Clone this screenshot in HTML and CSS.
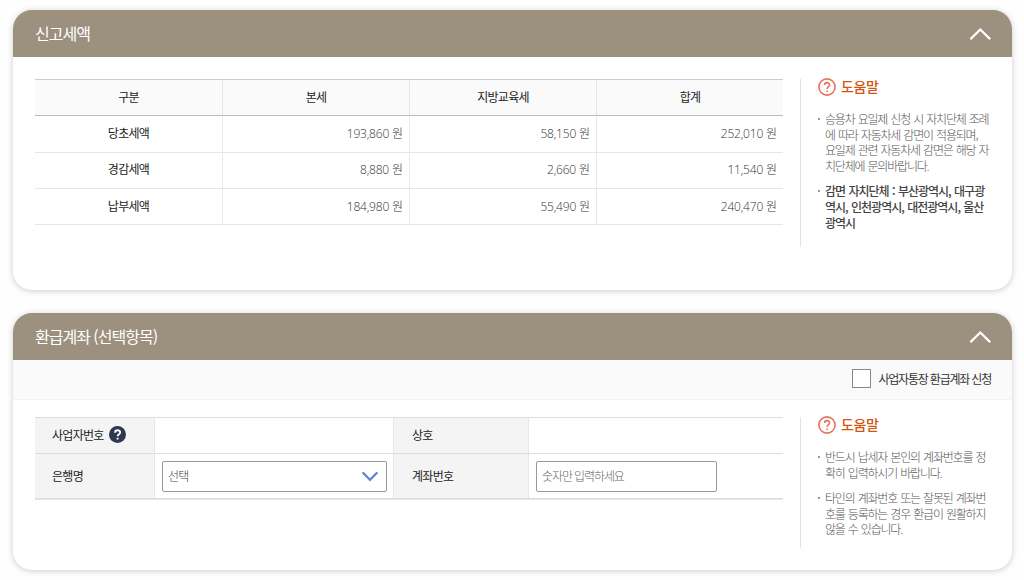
FILE: index.html
```html
<!DOCTYPE html>
<html lang="ko">
<head>
    <meta charset="UTF-8">
    <title>신고세액</title>
    <link rel="stylesheet" href="styles.css">
</head>
<body>
    <!-- 신고세액 -->
    <section class="card card-tax">
        <div class="card-header">
            <h2>신고세액</h2>
            <svg class="arrow" width="22" height="12" viewBox="0 0 22 12"><path d="M2 10.6 L11.3 1.5 L20.6 10.6"/></svg>
        </div>
        <div class="card-body">
            <table class="tax-table">
                <thead>
                    <tr><th>구분</th><th>본세</th><th>지방교육세</th><th>합계</th></tr>
                </thead>
                <tbody>
                    <tr><th>당초세액</th><td>193,860 <span>원</span></td><td>58,150 <span>원</span></td><td>252,010 <span>원</span></td></tr>
                    <tr><th>경감세액</th><td>8,880 <span>원</span></td><td>2,660 <span>원</span></td><td>11,540 <span>원</span></td></tr>
                    <tr><th>납부세액</th><td>184,980 <span>원</span></td><td>55,490 <span>원</span></td><td>240,470 <span>원</span></td></tr>
                </tbody>
            </table>
            <aside class="help">
                <h3>
                    <svg width="18" height="18" viewBox="0 0 18 18"><circle cx="9" cy="9" r="8.1"/><path d="M6.6 7 C6.6 3.8 11.6 3.9 11.6 6.9 C11.6 8.8 9.1 8.7 9.1 11 M9.1 12.6 V14"/></svg>
                    <span>도움말</span>
                </h3>
                <ul>
                    <li>승용차 요일제 신청 시 자치단체 조례<br>에 따라 자동차세 감면이 적용되며,<br>요일제 관련 자동차세 감면은 해당 자<br>치단체에 문의바랍니다.</li>
                    <li class="strong">감면 자치단체 : 부산광역시, 대구광<br>역시, 인천광역시, 대전광역시, 울산<br>광역시</li>
                </ul>
            </aside>
        </div>
    </section>

    <!-- 환급계좌 -->
    <section class="card card-refund">
        <div class="card-header">
            <h2>환급계좌 (선택항목)</h2>
            <svg class="arrow" width="22" height="12" viewBox="0 0 22 12"><path d="M2 10.6 L11.3 1.5 L20.6 10.6"/></svg>
        </div>
        <div class="option-bar">
            <label><input type="checkbox">사업자통장 환급계좌 신청</label>
        </div>
        <div class="card-body">
            <table class="form-table">
                <colgroup><col class="c1"><col class="c2"><col class="c3"><col class="c4"></colgroup>
                <tr>
                    <th><div class="label">사업자번호
                        <svg width="17" height="17" viewBox="0 0 16 16"><circle cx="8" cy="8" r="8"/><path d="M5.7 6.3 C5.7 3.2 10.5 3.3 10.5 6.1 C10.5 7.8 8.1 7.6 8.1 9.6 M8.1 11 V12.8"/></svg>
                    </div></th>
                    <td></td>
                    <th>상호</th>
                    <td></td>
                </tr>
                <tr class="row-input">
                    <th>은행명</th>
                    <td>
                        <div class="select">선택
                            <svg width="16" height="11" viewBox="0 0 16 11"><path d="M1.3 2 L8 8.9 L14.7 2"/></svg>
                        </div>
                    </td>
                    <th>계좌번호</th>
                    <td><input class="account" type="text" placeholder="숫자만 입력하세요"></td>
                </tr>
            </table>
            <aside class="help">
                <h3>
                    <svg width="18" height="18" viewBox="0 0 18 18"><circle cx="9" cy="9" r="8.1"/><path d="M6.6 7 C6.6 3.8 11.6 3.9 11.6 6.9 C11.6 8.8 9.1 8.7 9.1 11 M9.1 12.6 V14"/></svg>
                    <span>도움말</span>
                </h3>
                <ul>
                    <li>반드시 납세자 본인의 계좌번호를 정<br>확히 입력하시기 바랍니다.</li>
                    <li>타인의 계좌번호 또는 잘못된 계좌번<br>호를 등록하는 경우 환급이 원활하지<br>않을 수 있습니다.</li>
                </ul>
            </aside>
        </div>
    </section>
</body>
</html>
```
FILE: styles.css
```css
* {
    box-sizing: border-box;
}

body {
    margin: 0;
    padding: 10px 12px 0 13px;
    height: 580px;
    overflow: hidden;
    background: #fefefe;
    font-family: "Noto Sans CJK KR", sans-serif;
    font-size: 12px;
    letter-spacing: -0.7px;
    color: #222;
}

.card {
    border-radius: 19px;
    overflow: hidden;
    background: #fff;
    box-shadow: 0 1px 6px rgba(0, 0, 0, 0.2);
}

.card-tax {
    height: 280px;
    margin-bottom: 23px;
}

.card-refund {
    height: 257px;
}

.card-header {
    display: flex;
    align-items: center;
    justify-content: space-between;
    height: 47px;
    padding: 0 21px 0 22px;
    background: #9c907f;
    color: #fff;
}

.card-header h2 {
    margin: 0;
    padding-bottom: 2px;
    font-size: 16px;
    font-weight: 400;
    letter-spacing: -1px;
}

.arrow path {
    fill: none;
    stroke: #fff;
    stroke-width: 2.2;
    stroke-linecap: round;
}

.card-body {
    display: flex;
    align-items: flex-start;
    padding: 22px 22px 0;
}

.card-refund .card-body {
    padding-top: 17px;
}

table {
    flex: none;
    width: 748px;
    border-collapse: separate;
    border-spacing: 0;
    table-layout: fixed;
}

th {
    font-weight: 400;
    padding: 0 0 2px;
}

/* 세액 표 */
.tax-table {
    border-top: 1px solid #ccc;
}

.tax-table th,
.tax-table td {
    height: 36.3px;
    border-bottom: 1px solid #e6e6e6;
    border-left: 1px solid #e8e8e8;
    line-height: 18px;
}

.tax-table tr > :first-child {
    border-left: 0;
}

.tax-table thead th {
    background: #fafafa;
    border-bottom-color: #bbb;
}

.tax-table td {
    padding: 0 6px 0 0;
    text-align: right;
    color: #333;
    font-family: "Open Sans", "Noto Sans CJK KR", sans-serif;
    font-weight: 300;
    letter-spacing: -0.2px;
}

.tax-table td span {
    letter-spacing: 0;
}

/* 도움말 */
.help {
    flex: none;
    margin-left: 17px;
    padding-left: 17px;
    height: 168px;
    border-left: 1px solid #e2e2e2;
    color: #555;
}

.card-refund .help {
    height: 131px;
}

.help h3 {
    display: flex;
    align-items: center;
    gap: 5px;
    height: 15px;
    margin: 0 0 17px;
    font-size: 14px;
    font-weight: 500;
    letter-spacing: -0.4px;
    color: #d4560f;
}

.help h3 span {
    padding-bottom: 1px;
}

.help h3 svg {
    fill: none;
    stroke: #e6735c;
    stroke-width: 1.6;
}

.help ul {
    margin: 0;
    padding: 0;
    list-style: none;
}

.help li {
    position: relative;
    margin-bottom: 10px;
    padding-left: 7px;
    line-height: 15.6px;
    font-weight: 300;
    letter-spacing: -1.2px;
    word-spacing: 1px;
    white-space: nowrap;
}

.help li::before {
    content: "";
    position: absolute;
    left: 0;
    top: 7px;
    width: 2px;
    height: 2px;
    background: #999;
}

.help .strong {
    font-weight: 500;
    letter-spacing: -1px;
    color: #444;
}

/* 환급계좌 */
.option-bar {
    display: flex;
    align-items: center;
    justify-content: flex-end;
    height: 40px;
    padding: 0 21px 2px;
    background: #fafafa;
    border-bottom: 1px solid #f2f2f2;
}

.option-bar label {
    display: flex;
    align-items: center;
    gap: 7px;
    color: #333;
    letter-spacing: -1.2px;
}

.option-bar input {
    appearance: none;
    width: 19px;
    height: 19px;
    margin: 0;
    border: 1px solid #888;
    background: #fff;
}

.form-table {
    border-top: 1px solid #ddd;
    border-bottom: 1px solid #e6e6e6;
}

.form-table .c1 { width: 119px; }
.form-table .c2 { width: 239px; }
.form-table .c3 { width: 135px; }
.form-table .c4 { width: 255px; }

.form-table th,
.form-table td {
    height: 36px;
    border-bottom: 1px solid #ddd;
}

.form-table th {
    padding-left: 17px;
    background: #f4f4f4;
    text-align: left;
}

.form-table td + th {
    padding-left: 18px;
    border-left: 1px solid #e9e9e9;
}

.form-table td {
    padding: 0 7px;
    border-left: 1px solid #e6e6e6;
}

.form-table .row-input > * {
    height: 45px;
}

.label {
    display: flex;
    align-items: center;
    gap: 5px;
}

.label circle {
    fill: #2d3950;
}

.label path {
    fill: none;
    stroke: #fff;
    stroke-width: 1.8;
}

.select,
.account {
    display: flex;
    align-items: center;
    height: 31px;
    padding: 0 8px 2px 5px;
    border: 1px solid #999;
    border-radius: 2px;
    background: #fff;
    color: #444;
    font-weight: 300;
}

.select {
    justify-content: space-between;
    width: 225px;
}

.select svg {
    margin-top: 2px;
}

.select path {
    fill: none;
    stroke: #6286cf;
    stroke-width: 2.3;
    stroke-linecap: round;
}

.account {
    width: 181px;
    font-family: inherit;
    font-size: 12px;
    letter-spacing: -1.1px;
}

.account::placeholder {
    color: #666;
}
```
